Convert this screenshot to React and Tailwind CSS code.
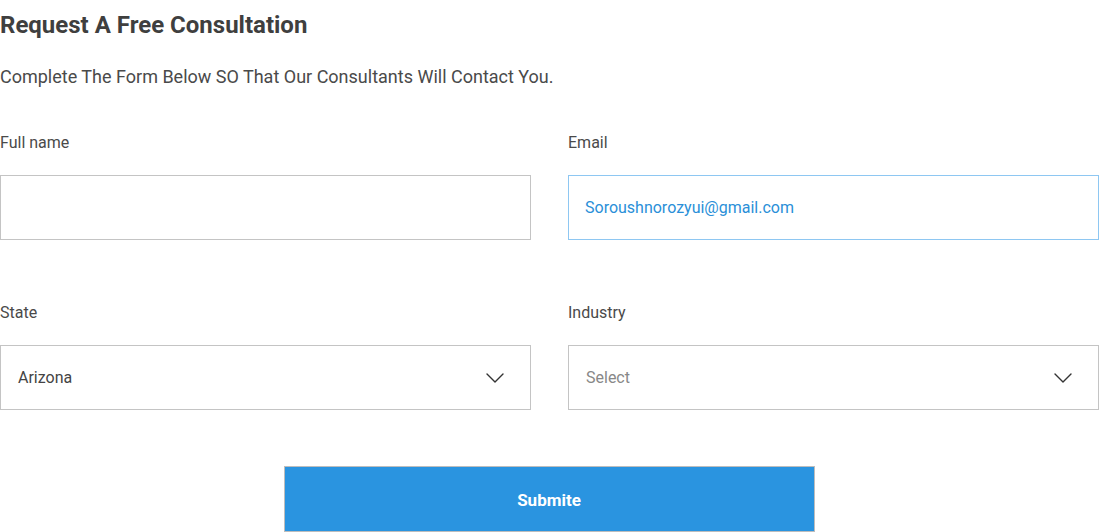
import React from "react";

const Chevron = () => (
  <svg width="18" height="10" viewBox="0 0 18 10" fill="none" className="shrink-0">
    <path d="M1 1l8 8 8-8" stroke="#333" strokeWidth="1.4" strokeLinecap="round" strokeLinejoin="round" />
  </svg>
);

export default function App() {
  return (
    <div className="w-[1099px] h-[532px] bg-white text-[#444] overflow-hidden" style={{ fontFamily: "Roboto, 'Noto Sans', sans-serif" }}>
      <h1 className="h-[30px] mt-[10px] leading-[30px] text-[24px] font-bold text-[#3f3f3f]">
        Request A Free Consultation
      </h1>
      <p className="h-[24px] mt-[25px] leading-[24px] text-[18px] text-[#4a4a4a]">
        Complete The Form Below SO That Our Consultants Will Contact You.
      </p>

      <div className="grid grid-cols-[531px_531px] gap-x-[37px] mt-[43px]">
        <div>
          <label className="block h-[22px] leading-[22px] text-[16px] text-[#4a4a4a]">Full name</label>
          <div className="mt-[21px] h-[65px] border border-[#c4c4c4] bg-white"></div>
        </div>
        <div>
          <label className="block h-[22px] leading-[22px] text-[16px] text-[#4a4a4a]">Email</label>
          <div className="mt-[21px] h-[65px] border border-[#8ec7f2] bg-white flex items-center px-[16px] text-[16px] text-[#2a8fd8]">
            Soroushnorozyui@gmail.com
          </div>
        </div>

        <div className="mt-[62px]">
          <label className="block h-[22px] leading-[22px] text-[16px] text-[#4a4a4a]">State</label>
          <div className="mt-[21px] h-[65px] border border-[#c4c4c4] bg-white flex items-center justify-between pl-[17px] pr-[26px] text-[16px] text-[#444]">
            <span>Arizona</span>
            <Chevron />
          </div>
        </div>
        <div className="mt-[62px]">
          <label className="block h-[22px] leading-[22px] text-[16px] text-[#4a4a4a]">Industry</label>
          <div className="mt-[21px] h-[65px] border border-[#c4c4c4] bg-white flex items-center justify-between pl-[17px] pr-[26px] text-[16px] text-[#888]">
            <span>Select</span>
            <Chevron />
          </div>
        </div>
      </div>

      <div className="flex justify-center mt-[56px] pr-[1px]">
        <button className="w-[531px] h-[66px] pt-[3px] bg-[#2a94e0] border border-[#bdbdbd] text-white text-[17px] font-bold">
          Submite
        </button>
      </div>
    </div>
  );
}
